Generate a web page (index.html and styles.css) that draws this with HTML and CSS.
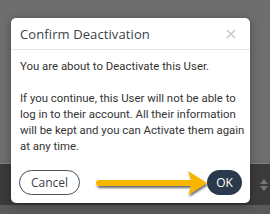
FILE: index.html
```html
<!DOCTYPE html>
<html>
<head>
<meta charset="utf-8">
<link rel="stylesheet" href="styles.css">
</head>
<body>
<div class="page">
  <div class="bg-top"></div>
  <div class="bg-band">
    <svg class="sort" width="8" height="12" viewBox="0 0 8 12"><path d="M4 0 L8 5 H0 Z M0 7 H8 L4 12 Z" fill="#777"/></svg>
  </div>
  <div class="bg-bottom"></div>
</div>
<div class="modal">
  <div class="modal-header">
    <div class="title">Confirm Deactivation</div>
    <svg class="close" width="10" height="10" viewBox="0 0 10 10"><path d="M1 1 L9 9 M9 1 L1 9" stroke="#c9c9c9" stroke-width="1.6"/></svg>
  </div>
  <div class="modal-body">
    <p>You are about to Deactivate this User.</p>
    <p>If you continue, this User will not be able to log in to their account. All their information will be kept and you can Activate them again at any time.</p>
  </div>
  <div class="modal-footer">
    <button class="btn btn-cancel">Cancel</button>
    <button class="btn btn-ok">OK</button>
  </div>
  <svg class="arrow" width="130" height="30" viewBox="0 0 130 30">
    <defs>
      <filter id="sh" x="-10%" y="-30%" width="120%" height="180%">
        <feDropShadow dx="1" dy="2" stdDeviation="1" flood-color="#000" flood-opacity="0.6"/>
      </filter>
    </defs>
    <path d="M4 12 H96 L93 3 L112 15 L93 27 L96 18 H4 A3 3 0 0 1 4 12 Z" fill="#f7b700" filter="url(#sh)"/>
  </svg>
</div>
</body>
</html>
```
FILE: styles.css
```css
html, body {
  margin: 0;
  padding: 0;
  width: 270px;
  height: 214px;
  overflow: hidden;
}
.page {
  display: flex;
  flex-direction: column;
  height: 214px;
}
.bg-top {
  height: 163px;
  background: #6e6e6e;
  border-bottom: 1px solid #7e7e7e;
}
.bg-band {
  height: 41px;
  background: #3b3b3b;
  display: flex;
  align-items: center;
  justify-content: flex-end;
  padding-right: 2px;
}
.bg-bottom {
  flex: 1;
  background: #5a5a5a;
}
.modal {
  position: absolute;
  left: 11px;
  top: 18px;
  width: 239px;
  height: 185px;
  background: #fff;
  border-radius: 5px;
  box-shadow: 0 2px 8px rgba(0,0,0,0.35);
  display: flex;
  flex-direction: column;
}
.modal-header {
  height: 31px;
  border-bottom: 1px solid #e6e6e6;
  display: flex;
  align-items: center;
  justify-content: space-between;
  padding: 0 14px 0 9px;
}
.title {
  font-family: "Open Sans", sans-serif;
  font-size: 13px;
  color: #3a3f4a;
  letter-spacing: 0.1px;
}
.modal-body {
  padding: 8px 4px 0 9px;
  font-family: Roboto, sans-serif;
  font-size: 11.4px;
  line-height: 16px;
  color: #343434;
}
.modal-body p {
  margin: 0 0 16px 0;
}
.modal-footer {
  margin-top: auto;
  display: flex;
  justify-content: space-between;
  align-items: center;
  padding: 0 8px 8px 8px;
}
.btn {
  height: 25px;
  border-radius: 13px;
  font-family: "Open Sans", sans-serif;
  font-size: 12px;
  padding: 0;
}
.btn-cancel {
  width: 61px;
  background: #fff;
  border: 1px solid #4b505c;
  color: #3a3f4a;
}
.btn-ok {
  width: 35px;
  background: #2a3a4c;
  border: none;
  color: #fff;
}
.arrow {
  position: absolute;
  left: 84px;
  top: 150px;
}
```
